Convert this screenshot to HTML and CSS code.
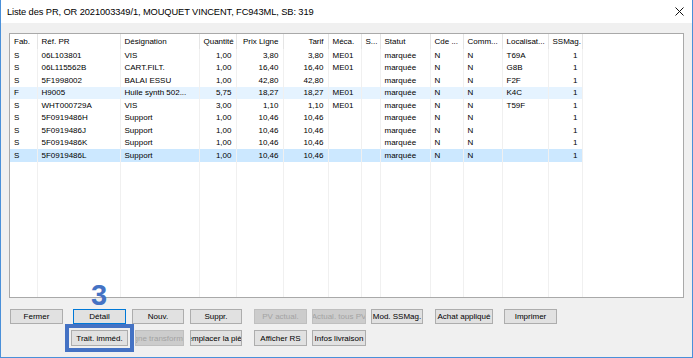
FILE: index.html
```html
<!DOCTYPE html>
<html lang="fr">
<head>
    <meta charset="UTF-8">
    <title>Liste des PR</title>
    <link rel="stylesheet" href="styles.css">
</head>
<body>
<div class="window">
    <div class="titlebar">
        <span class="title">Liste des PR, OR 2021003349/1, MOUQUET VINCENT, FC943ML, SB: 319</span>
        <svg class="close" width="9" height="9" viewBox="0 0 9 9"><path d="M0.5 0.5L8.5 8.5M8.5 0.5L0.5 8.5" stroke="#111" stroke-width="1" fill="none"/></svg>
    </div>
    <div class="client">
        <!--liste-->
        <div class="listview">
            <table class="grid">
                <colgroup>
                    <col style="width:27px"><col style="width:83px"><col style="width:79px">
                    <col style="width:37px"><col style="width:47px"><col style="width:45px">
                    <col style="width:33px"><col style="width:19px"><col style="width:50px">
                    <col style="width:33px"><col style="width:39px"><col style="width:46px">
                    <col style="width:34px">
                </colgroup>
                <thead>
                <tr>
                    <th>Fab.</th><th>Réf. PR</th><th>Désignation</th><th class="r">Quantité</th>
                    <th class="r">Prix Ligne</th><th class="r">Tarif</th><th>Méca.</th><th>S...</th>
                    <th>Statut</th><th>Cde ...</th><th>Comm...</th><th>Localisat...</th><th>SSMag.</th>
                </tr>
                </thead>
                <tbody>
                <tr><td>S</td><td>06L103801</td><td>VIS</td><td class="r">1,00</td><td class="r">3,80</td><td class="r">3,80</td><td>ME01</td><td></td><td>marquée</td><td>N</td><td>N</td><td>T69A</td><td class="r">1</td></tr>
                <tr><td>S</td><td>06L115562B</td><td>CART.FILT.</td><td class="r">1,00</td><td class="r">16,40</td><td class="r">16,40</td><td>ME01</td><td></td><td>marquée</td><td>N</td><td>N</td><td>G8B</td><td class="r">1</td></tr>
                <tr><td>S</td><td>5F1998002</td><td>BALAI ESSU</td><td class="r">1,00</td><td class="r">42,80</td><td class="r">42,80</td><td></td><td></td><td>marquée</td><td>N</td><td>N</td><td>F2F</td><td class="r">1</td></tr>
                <tr class="hover"><td>F</td><td>H9005</td><td>Huile synth 502...</td><td class="r">5,75</td><td class="r">18,27</td><td class="r">18,27</td><td>ME01</td><td></td><td>marquée</td><td>N</td><td>N</td><td>K4C</td><td class="r">1</td></tr>
                <tr><td>S</td><td>WHT000729A</td><td>VIS</td><td class="r">3,00</td><td class="r">1,10</td><td class="r">1,10</td><td>ME01</td><td></td><td>marquée</td><td>N</td><td>N</td><td>T59F</td><td class="r">1</td></tr>
                <tr><td>S</td><td>5F0919486H</td><td>Support</td><td class="r">1,00</td><td class="r">10,46</td><td class="r">10,46</td><td></td><td></td><td>marquée</td><td>N</td><td>N</td><td></td><td class="r">1</td></tr>
                <tr><td>S</td><td>5F0919486J</td><td>Support</td><td class="r">1,00</td><td class="r">10,46</td><td class="r">10,46</td><td></td><td></td><td>marquée</td><td>N</td><td>N</td><td></td><td class="r">1</td></tr>
                <tr><td>S</td><td>5F0919486K</td><td>Support</td><td class="r">1,00</td><td class="r">10,46</td><td class="r">10,46</td><td></td><td></td><td>marquée</td><td>N</td><td>N</td><td></td><td class="r">1</td></tr>
                <tr class="selected"><td>S</td><td>5F0919486L</td><td>Support</td><td class="r">1,00</td><td class="r">10,46</td><td class="r">10,46</td><td></td><td></td><td>marquée</td><td>N</td><td>N</td><td></td><td class="r">1</td></tr>
                <tr class="filler"><td></td><td></td><td></td><td></td><td></td><td></td><td></td><td></td><td></td><td></td><td></td><td></td><td></td></tr>
                </tbody>
            </table>
        </div>
        <!--boutons-->
        <div class="buttons">
            <div class="btn-row">
                <button class="btn">Fermer</button>
                <button class="btn default gap10">Détail</button>
                <button class="btn w52">Nouv.</button>
                <button class="btn w52">Suppr.</button>
                <button class="btn gap12" disabled>PV actual.</button>
                <button class="btn w54 gap5" disabled>Actual. tous PV</button>
                <button class="btn w52 gap5">Mod. SSMag.</button>
                <button class="btn w58 gap12">Achat appliqué</button>
                <button class="btn gap11">Imprimer</button>
            </div>
            <div class="btn-row row2">
                <button class="btn w57 marked">Trait. imméd.</button>
                <button class="btn w49 gap7" disabled>Ligne transformée</button>
                <button class="btn w52">Remplacer la pièce</button>
                <button class="btn gap12">Afficher RS</button>
                <button class="btn w54 gap5">Infos livraison</button>
            </div>
        </div>
        <div class="step">3</div>
    </div>
</div>
</body>
</html>
```

FILE: styles.css
```css
*{margin:0;padding:0;box-sizing:border-box;}
body{background:#fff;font-family:"Liberation Sans",Arial,sans-serif;}
.window{
    width:693px;
    height:358px;
    display:flex;
    flex-direction:column;
    border:1px solid #4a90d9;
    border-top:none;
}
.titlebar{
    height:23px;
    display:flex;
    align-items:center;
    justify-content:space-between;
    padding:0 8px 0 6px;
    background:#fff;
}
.title{
    font-size:9.3px;
    letter-spacing:-0.1px;
    color:#000;
}
.close{display:block;margin-top:-1px;}
.client{
    position:relative;
    flex:1;
    display:flex;
    flex-direction:column;
    padding:10px 8px 0 8px;
    background:#f0f0f0;
}
/*liste*/
.listview{
    height:265px;
    background:#fff;
    border:1px solid #a9a9a9;
    overflow:hidden;
}
.grid{
    width:572px;
    height:100%;
    table-layout:fixed;
    border-collapse:collapse;
    font-size:8px;
    color:#000;
}
.grid th,.grid td{
    padding:0 4px;
    text-align:left;
    font-weight:normal;
    white-space:nowrap;
    overflow:hidden;
}
.grid th{
    height:15px;
    border-right:1px solid #e5e5e5;
}
.grid td{
    height:12.5px;
    border-right:1px solid #f0f0f0;
}
.grid .r{text-align:right;}
.grid tr.hover td{background:#e5f3ff;}
.grid tr.selected td{background:#cce8ff;}
.grid tr.filler td{height:auto;}
/*boutons*/
.buttons{
    display:flex;
    flex-direction:column;
    gap:6px;
    padding-top:11px;
}
.btn-row{
    display:flex;
    padding-left:1px;
}
.btn-row.row2{padding-left:62px;}
.btn{
    width:53px;
    height:15px;
    display:flex;
    align-items:center;
    justify-content:center;
    overflow:hidden;
    white-space:nowrap;
    font-family:"Liberation Sans",Arial,sans-serif;
    font-size:8px;
    color:#000;
    background:#e1e1e1;
    border:1px solid #adadad;
    margin-left:6px;
}
.btn-row .btn:first-child{margin-left:0;}
.btn.default{border-color:#0078d7;}
.btn:disabled{
    color:#a3a3a3;
    background:#cccccc;
    border-color:#bfbfbf;
}
.row2 .btn{height:16px;}
.w49{width:49px;}
.w52{width:52px;}
.w54{width:54px;}
.w57{width:57px;}
.w58{width:58px;}
.btn-row .gap5{margin-left:5px;}
.btn-row .gap7{margin-left:7px;}
.btn-row .gap10{margin-left:10px;}
.btn-row .gap11{margin-left:11px;}
.btn-row .gap12{margin-left:12px;}
/*repère*/
.btn.marked{
    outline:4px solid #4472c4;
    outline-offset:2px;
}
.step{
    position:absolute;
    left:90px;
    top:258px;
    font-size:29px;
    line-height:29px;
    font-weight:bold;
    color:#4472c4;
}
```
